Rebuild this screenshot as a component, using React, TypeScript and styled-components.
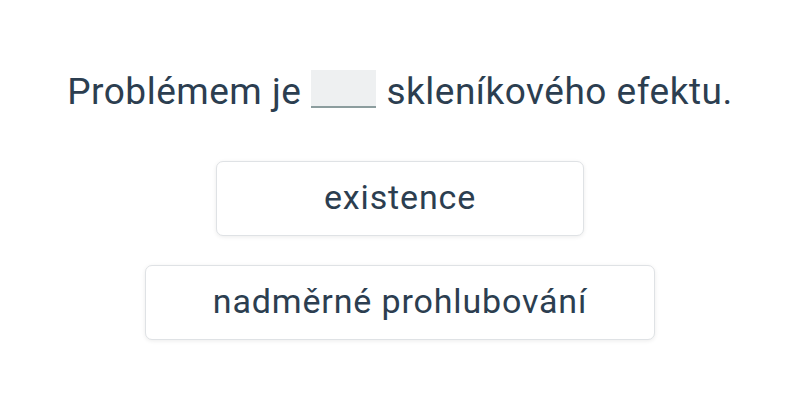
import styled, { createGlobalStyle } from "styled-components";

const GlobalStyle = createGlobalStyle`
    html, body { margin: 0; padding: 0; background: #ffffff; }
    body { font-family: Roboto, "Noto Sans", sans-serif; color: #2c3e50; }
`;

const Page = styled.div`
    width: 800px;
    height: 400px;
    display: flex;
    flex-direction: column;
    align-items: center;
    padding-top: 70px;
    box-sizing: border-box;
`;

const Sentence = styled.p`
    margin: 0;
    display: flex;
    align-items: center;
    gap: 10px;
    height: 38px;
    font-size: 37px;
    line-height: 38px;
    letter-spacing: 0.5px;
    white-space: nowrap;
`;

const Words = styled.span`
    padding-top: 6px;
`;

const Blank = styled.span`
    display: inline-block;
    width: 65px;
    height: 36px;
    background: #eef0f1;
    border-bottom: 2px solid #8c9d9e;
`;

const Options = styled.div`
    margin-top: 53px;
    display: flex;
    flex-direction: column;
    align-items: center;
    gap: 29px;
`;

const Option = styled.button`
    display: flex;
    align-items: center;
    justify-content: center;
    min-width: 368px;
    height: 75px;
    padding: 0 67px 4px;
    box-sizing: border-box;
    background: #ffffff;
    border: 1px solid #dfe2e5;
    border-radius: 7px;
    box-shadow: 0 1px 4px rgba(0, 0, 0, 0.08);
    font-family: Roboto, "Noto Sans", sans-serif;
    font-size: 34px;
    letter-spacing: 0.85px;
    color: #2c3e50;
    white-space: nowrap;
    cursor: pointer;
`;

export default function App() {
    const options = ["existence", "nadměrné prohlubování"];
    return (
        <>
            <GlobalStyle />
            <Page>
                <Sentence>
                    <Words>Problémem je</Words>
                    <Blank />
                    <Words>skleníkového efektu.</Words>
                </Sentence>
                <Options>
                    {options.map((o) => (
                        <Option key={o}>{o}</Option>
                    ))}
                </Options>
            </Page>
        </>
    );
}
